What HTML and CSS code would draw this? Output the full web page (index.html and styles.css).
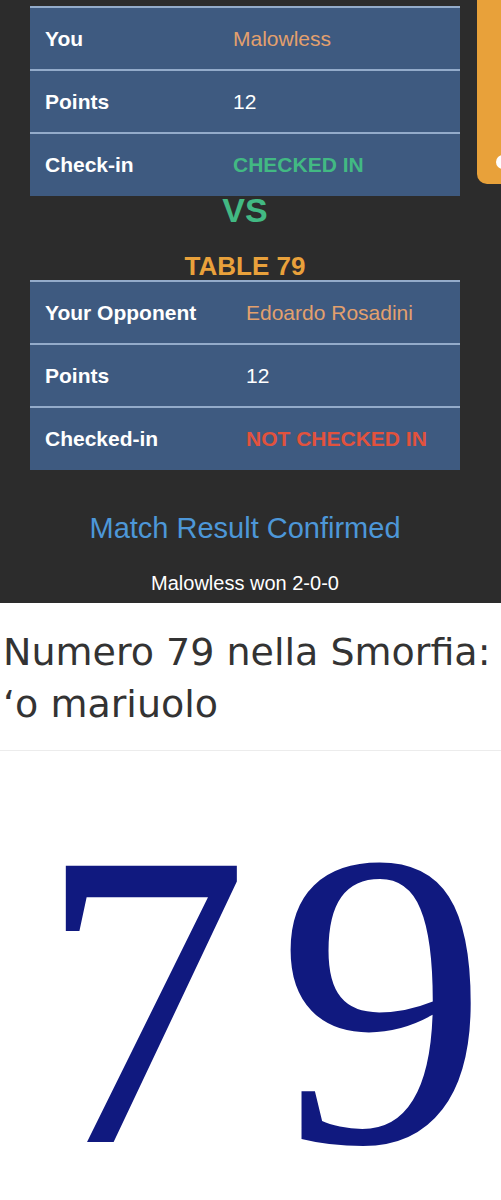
FILE: index.html
```html
<!DOCTYPE html>
<html lang="en">
<head>
    <meta charset="UTF-8">
    <meta name="viewport" content="width=device-width, initial-scale=1.0">
    <title>Table 79</title>
    <link rel="stylesheet" href="styles.css">
</head>
<body>
    <div class="match">
        <div class="slide">
            <table class="pair you">
                <tr>
                    <th>You</th>
                    <td class="name">Malowless</td>
                </tr>
                <tr>
                    <th>Points</th>
                    <td>12</td>
                </tr>
                <tr>
                    <th>Check-in</th>
                    <td class="ok">CHECKED IN</td>
                </tr>
            </table>

            <div class="vs">VS</div>
            <div class="table-no">TABLE 79</div>

            <table class="pair opponent">
                <tr>
                    <th>Your Opponent</th>
                    <td class="name">Edoardo Rosadini</td>
                </tr>
                <tr>
                    <th>Points</th>
                    <td>12</td>
                </tr>
                <tr>
                    <th>Checked-in</th>
                    <td class="missing">NOT CHECKED IN</td>
                </tr>
            </table>

            <div class="result">Match Result Confirmed</div>
            <div class="score">Malowless won 2-0-0</div>
        </div>

        <div class="next-card">
            <span class="dot"></span>
        </div>
    </div>

    <div class="article">
        <h1>Numero 79 nella Smorfia:<br>‘o mariuolo</h1>
        <hr>
        <div class="big-number"><span>7</span><span>9</span></div>
    </div>
</body>
</html>
```

FILE: styles.css
```css
body {
    margin: 0;
    background: #fff;
    font-family: "Liberation Sans", Arial, sans-serif;
}

.match {
    display: flex;
    background-color: #2c2c2c;
    height: 603px;
    overflow: hidden;
}

.slide {
    flex: 0 0 430px;
    margin-left: 30px;
    padding-top: 6px;
}

.pair {
    width: 100%;
    border-collapse: collapse;
    background-color: #3e5a80;
    font-size: 21px;
}

.pair tr {
    border-top: 2px solid #93abca;
}

.pair th,
.pair td {
    box-sizing: border-box;
    height: 63px;
    padding: 0 15px;
    text-align: left;
    vertical-align: middle;
    color: #fff;
}

.pair th {
    font-weight: bold;
}

.you th {
    width: 188px;
}

.opponent th {
    width: 201px;
}

.pair .name {
    color: #e3a06d;
}

.pair .ok {
    color: #42b983;
    font-weight: bold;
}

.pair .missing {
    color: #e2523d;
    font-weight: bold;
}

.vs {
    margin-top: -3px;
    font-size: 34px;
    line-height: 1;
    font-weight: bold;
    color: #42b983;
    text-align: center;
}

.table-no {
    margin-top: 25px;
    font-size: 26px;
    line-height: 28px;
    font-weight: bold;
    color: #e9a13b;
    text-align: center;
}

.result {
    margin-top: 44px;
    font-size: 29px;
    line-height: 1;
    color: #4d97d8;
    text-align: center;
}

.score {
    margin-top: 30px;
    font-size: 20px;
    line-height: 1;
    color: #fff;
    text-align: center;
}

/* the next slide peeking in from the right */
.next-card {
    position: relative;
    flex: 0 0 60px;
    margin-left: 17px;
    height: 184px;
    background-color: #e8a13a;
    border-radius: 0 0 10px 10px;
}

.next-card .dot {
    position: absolute;
    left: 19px;
    top: 155px;
    width: 14px;
    height: 14px;
    border-radius: 50%;
    background: #fff;
}

.article {
    overflow: hidden;
}

.article h1 {
    margin: 23px 0 0 3px;
    font-family: "DejaVu Sans", Verdana, sans-serif;
    font-size: 38px;
    font-weight: normal;
    line-height: 52px;
    color: #333;
}

.article hr {
    margin: 20px 0 0;
    border: none;
    border-top: 1px solid #ececec;
}

.big-number {
    display: flex;
    gap: 28px;
    margin-top: 59px;
    padding-left: 38px;
    font-family: "Liberation Serif", "Times New Roman", serif;
    font-size: 422px;
    line-height: 380px;
    color: #10197f;
}
```
